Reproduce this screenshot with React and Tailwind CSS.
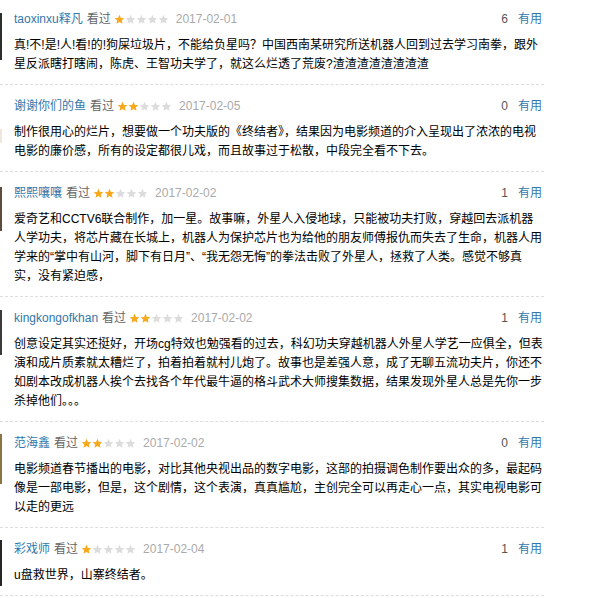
import React from "react";

const comments = [
  {
    user: "taoxinxu释凡",
    stars: 1,
    date: "2017-02-01",
    votes: 6,
    avatar: "bg-[#2b2f2b]",
    avatarBox: "mt-[15px] h-[47px]",
    text: "真!不!是!人!看!的!狗屎垃圾片，不能给负星吗？中国西南某研究所送机器人回到过去学习南拳，跟外星反派瞎打瞎闹，陈虎、王智功夫学了，就这么烂透了荒废?渣渣渣渣渣渣渣渣",
  },
  {
    user: "谢谢你们的鱼",
    stars: 2,
    date: "2017-02-05",
    votes: 0,
    avatar: "bg-[#efe6dc]",
    avatarBox: "mt-[44px] h-[14px]",
    text: "制作很用心的烂片，想要做一个功夫版的《终结者》，结果因为电影频道的介入呈现出了浓浓的电视电影的廉价感，所有的设定都很儿戏，而且故事过于松散，中段完全看不下去。",
  },
  {
    user: "熙熙嚷嚷",
    stars: 2,
    date: "2017-02-02",
    votes: 1,
    avatar: "bg-[#5e4c3c]",
    avatarBox: "mt-[15px] h-[44px]",
    text: "爱奇艺和CCTV6联合制作，加一星。故事嘛，外星人入侵地球，只能被功夫打败，穿越回去派机器人学功夫，将芯片藏在长城上，机器人为保护芯片也为给他的朋友师傅报仇而失去了生命，机器人用学来的“掌中有山河，脚下有日月”、“我无怨无悔”的拳法击败了外星人，拯救了人类。感觉不够真实，没有紧迫感，",
  },
  {
    user: "kingkongofkhan",
    stars: 2,
    date: "2017-02-02",
    votes: 1,
    avatar: "bg-[#3a3a3a]",
    avatarBox: "mt-[13px] h-[45px] w-[1px]",
    text: "创意设定其实还挺好，开场cg特效也勉强看的过去，科幻功夫穿越机器人外星人学艺一应俱全，但表演和成片质素就太糟烂了，拍着拍着就村儿炮了。故事也是差强人意，成了无聊五流功夫片，你还不如剧本改成机器人挨个去找各个年代最牛逼的格斗武术大师搜集数据，结果发现外星人总是先你一步杀掉他们。。。",
  },
  {
    user: "范海鑫",
    stars: 2,
    date: "2017-02-02",
    votes: 0,
    avatar: "bg-[#8a7442]",
    avatarBox: "mt-[12px] h-[50px]",
    text: "电影频道春节播出的电影，对比其他央视出品的数字电影，这部的拍摄调色制作要出众的多，最起码像是一部电影，但是，这个剧情，这个表演，真真尴尬，主创完全可以再走心一点，其实电视电影可以走的更远",
  },
  {
    user: "彩戏师",
    stars: 1,
    date: "2017-02-04",
    votes: 1,
    avatar: "bg-[#262626]",
    avatarBox: "mt-[12px] h-[46px]",
    text: "u盘救世界，山寨终结者。",
  },
];

const Star = ({ on }) => (
  <svg width="11" height="11" viewBox="0 0 24 24" className="block">
    <path
      d="M12 1.5l3.1 7 7.4.6-5.6 4.9 1.7 7.4L12 17.5l-6.6 3.9 1.7-7.4L1.5 9.1l7.4-.6z"
      fill={on ? "#f7a81b" : "#dcdcdc"}
    />
  </svg>
);

const Comment = ({ c }) => (
  <div className="flex border-b border-dashed border-[#dddddd]">
    <div className="w-[3px] shrink-0">
      <div className={`w-[2px] ${c.avatar} ${c.avatarBox}`} />
    </div>
    <div className="flex-1 pl-[11px] pt-[11px] pb-[10px]">
      <div className="flex items-center justify-between h-[20px] leading-[20px] text-[12px]">
        <div className="flex items-center">
          <span className="text-[#3377aa]">{c.user}</span>
          <span className="ml-[4px] text-[#666666]">看过</span>
          <span className="ml-[3px] flex">
            {[0, 1, 2, 3, 4].map((i) => (
              <Star key={i} on={i < c.stars} />
            ))}
          </span>
          <span className="ml-[7px] text-[#aaaaaa]">{c.date}</span>
        </div>
        <div className="flex items-center pr-[2px]">
          <span className="text-[#555555]">{c.votes}</span>
          <span className="ml-[10px] text-[#3377aa]">有用</span>
        </div>
      </div>
      <p className="mt-[7px] text-[12px] leading-[19px] text-black">{c.text}</p>
    </div>
  </div>
);

export default function App() {
  return (
    <div className="min-h-screen bg-white overflow-hidden">
      <div className="w-[544px] -mt-[2px] font-['Liberation_Sans','Noto_Sans_CJK_SC',sans-serif]">
        {comments.map((c, i) => (
          <Comment key={i} c={c} />
        ))}
      </div>
    </div>
  );
}
